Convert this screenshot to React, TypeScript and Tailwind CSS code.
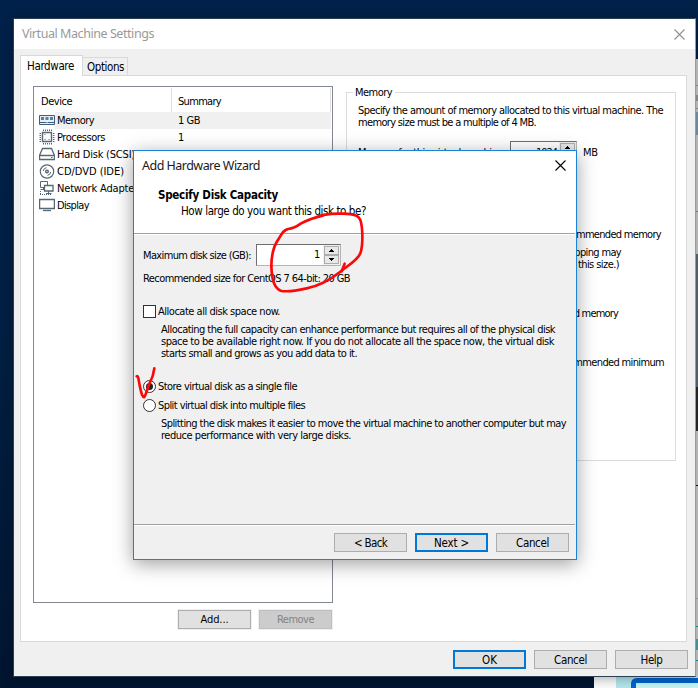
import { useLayoutEffect, useRef, useState } from "react";
import type { ReactNode } from "react";

// Spreads the letters of a label so that it takes exactly `w` pixels
function Text({ w, children, className = "" }: { w: number; children: string; className?: string }) {
  const ref = useRef<HTMLSpanElement>(null);
  const [spacing, setSpacing] = useState(0);

  useLayoutEffect(() => {
    const el = ref.current;
    if (!el) return;
    el.style.letterSpacing = "0px";
    const natural = el.getBoundingClientRect().width;
    setSpacing((w - natural) / children.length);
    el.style.letterSpacing = `${(w - natural) / children.length}px`;
  }, [w, children]);

  return (
    <span ref={ref} className={`inline-block w-max whitespace-nowrap ${className}`} style={{ letterSpacing: `${spacing}px` }}>
      {children}
    </span>
  );
}

function Button({
  label,
  w,
  variant = "normal",
}: {
  label: string;
  w: number;
  variant?: "normal" | "primary" | "disabled";
}) {
  const look = {
    normal: "border border-[#adadad] bg-[#e1e1e1] text-black",
    primary: "border-2 border-[#0078d7] bg-[#e1e1e1] text-black",
    disabled: "border border-[#bfbfbf] bg-[#cccccc] text-[#838383]",
  }[variant];
  return (
    <button className={`flex h-[19px] w-[73px] items-center justify-center leading-3 ${look}`}>
      <Text w={w}>{label}</Text>
    </button>
  );
}

function CloseIcon({ color }: { color: string }) {
  return (
    <svg width="11" height="11" viewBox="0 0 11 11" fill="none" stroke={color} strokeWidth="1.1">
      <path d="M0.5 0.5 L10.5 10.5 M10.5 0.5 L0.5 10.5" />
    </svg>
  );
}

function Spinner({ value, w, className }: { value: string; w: number; className: string }) {
  return (
    <div className={`flex border border-[#b4b4b4] border-l-[#6e6e6e] border-t-[#6e6e6e] bg-white ${className}`}>
      <div className="flex flex-1 items-center justify-end pr-0.5">
        <Text w={w}>{value}</Text>
      </div>
      <div className="flex w-[17px] flex-col bg-[#f0f0f0] p-px">
        <div className="flex flex-1 items-center justify-center border border-[#adadad] bg-[#e8e8e8]">
          <svg width="5" height="3" viewBox="0 0 5 3" shapeRendering="crispEdges"><path d="M2 0 H3 V1 H4 V2 H5 V3 H0 V2 H1 V1 H2 Z" /></svg>
        </div>
        <div className="flex flex-1 items-center justify-center border border-[#adadad] bg-[#e8e8e8]">
          <svg width="5" height="3" viewBox="0 0 5 3" shapeRendering="crispEdges"><path d="M0 0 H5 V1 H4 V2 H3 V3 H2 V2 H1 V1 H0 Z" /></svg>
        </div>
      </div>
    </div>
  );
}

const ICONS: Record<string, ReactNode> = {
  memory: (
    <>
      <path d="M0.5 3.5 H15.5 V12.5 H0.5 Z" fill="#e6eef4" stroke="#3d5f7e" />
      <path d="M2 5 H5 V8 H2 Z M6.5 5 H9.5 V8 H6.5 Z M11 5 H14 V8 H11 Z" fill="#5880a3" stroke="none" />
      <path d="M1 10.5 H7.5 M8.5 10.5 H15" stroke="#3d5f7e" />
    </>
  ),
  cpu: (
    <>
      <path d="M3.5 3.5 H12.5 V12.5 H3.5 Z" strokeWidth="1.4" />
      <path d="M4.5 0.5 V2 M6.5 0.5 V2 M8.5 0.5 V2 M10.5 0.5 V2 M12.5 0.5 V2 M4.5 14 V15.5 M6.5 14 V15.5 M8.5 14 V15.5 M10.5 14 V15.5 M12.5 14 V15.5" />
      <path d="M0.5 4.5 H2 M0.5 6.5 H2 M0.5 8.5 H2 M0.5 10.5 H2 M0.5 12.5 H2 M14 4.5 H15.5 M14 6.5 H15.5 M14 8.5 H15.5 M14 10.5 H15.5 M14 12.5 H15.5" />
      <path d="M5.5 5.5 H6.5 M9.5 10.5 H10.5 M5.5 10.5 H6.5" />
    </>
  ),
  disk: (
    <>
      <path d="M3.5 2.5 H12.5 L15.5 9.5 V13.5 H0.5 V9.5 Z M0.5 9.5 H15.5" strokeWidth="1.3" />
      <path d="M12 11.5 H13.5" />
    </>
  ),
  cd: (
    <>
      <circle cx="8" cy="8.5" r="6.7" strokeWidth="1.2" />
      <circle cx="8" cy="8.5" r="1.3" strokeWidth="1.4" />
      <path d="M4.2 8 A4 4 0 0 1 7.5 4.7 M11.8 9 A4 4 0 0 1 8.5 12.3" />
    </>
  ),
  network: (
    <>
      <path d="M1.5 1.5 H8.5 V7.5 H1.5 Z M4.5 7.5 V9.5 M1.5 9.5 H5" />
      <path d="M5.5 5.5 H14 V11 H5.5 Z" fill="#fff" strokeWidth="1.3" />
      <path d="M9.5 11 V13 M7 13.5 H12.5" />
      <path d="M1.5 11 V14.5 M1 14.5 H12" strokeDasharray="1 1" />
    </>
  ),
  display: (
    <>
      <path d="M0.6 2.5 H15.4 V11.5 H0.6 Z" strokeWidth="1.3" />
      <path d="M4 13.5 H12" strokeWidth="1.3" />
    </>
  ),
};

const DEVICES = [
  { icon: "memory", name: "Memory", w: 37, summary: "1 GB", sw: 22 },
  { icon: "cpu", name: "Processors", w: 48, summary: "1", sw: 6 },
  { icon: "disk", name: "Hard Disk (SCSI)", w: 78, summary: "", sw: 0 },
  { icon: "cd", name: "CD/DVD (IDE)", w: 67, summary: "", sw: 0 },
  { icon: "network", name: "Network Adapter", w: 81, summary: "", sw: 0 },
  { icon: "display", name: "Display", w: 32, summary: "", sw: 0 },
];

function DeviceList() {
  return (
    <div className="h-[517px] w-[300px] border border-[#828790] bg-white">
      <div className="flex h-[25px] pr-px pt-px">
        <div className="flex w-[138px] items-center border-r border-[#e0e0e0] pl-[7px] pt-1">
          <Text w={31}>Device</Text>
        </div>
        <div className="flex flex-1 items-center border-r border-[#e0e0e0] pl-1.5 pt-1">
          <Text w={43}>Summary</Text>
        </div>
      </div>
      {DEVICES.map(({ icon, name, w, summary, sw }) => (
        <div key={icon} className="flex h-[17px] pl-[5px] pr-px">
          <svg width="16" height="17" viewBox="0 0 16 17" fill="none" stroke="#566775">
            {ICONS[icon]}
          </svg>
          <div className={`flex flex-1 items-center pt-px ${icon === "memory" ? "bg-[#f0f0f0]" : ""}`}>
            <div className="w-[123px] pl-0.5">
              <Text w={w}>{name}</Text>
            </div>
            {summary && <Text w={sw}>{summary}</Text>}
          </div>
        </div>
      ))}
    </div>
  );
}

function MemoryGroup() {
  return (
    <fieldset className="relative h-[369px] w-[330px] border border-[#dcdcdc] pl-[11px]">
      <div className="-ml-[5px] -mt-1.5 h-3 w-[42px] bg-white pl-0.5">
        <Text w={37}>Memory</Text>
      </div>
      <div className="mt-1.5 flex flex-col">
        <Text w={305}>Specify the amount of memory allocated to this virtual machine. The</Text>
        <Text w={178}>memory size must be a multiple of 4 MB.</Text>
      </div>
      <div className="mt-3 flex h-[23px] items-center">
        <div className="w-[152px]">
          <Text w={148}>Memory for this virtual machine:</Text>
        </div>
        <Spinner value="1024" w={21} className="h-[23px] w-[67px]" />
        <div className="pl-1.5">
          <Text w={15}>MB</Text>
        </div>
      </div>
      <div className="ml-[153px] mt-[65px] flex flex-col">
        <Text w={150}>Maximum recommended memory</Text>
        <Text w={106} className="ml-1 mt-1.5">(Memory swapping may</Text>
        <Text w={104} className="ml-1">occur beyond this size.)</Text>
        <Text w={104} className="ml-[3px] mt-[37px]">Recommended memory</Text>
        <Text w={153} className="mt-[37px]">Guest OS recommended minimum</Text>
      </div>
    </fieldset>
  );
}

function SettingsWindow() {
  return (
    <div className="absolute left-[13px] top-[18px] flex h-[659px] w-[683px] flex-col border border-[#2d4053] border-r-[#9a9a9a] bg-[#f0f0f0] shadow-[0_2px_10px_rgba(0,0,0,0.3)]">
      <div className="flex h-[30px] shrink-0 items-center justify-between bg-white pl-2 pr-[10px]">
        <Text w={132} className="font-['Noto_Sans'] text-[12.5px] leading-4 text-[#999]">Virtual Machine Settings</Text>
        <CloseIcon color="#8f8f8f" />
      </div>

      <div className="mt-1.5 flex h-[20px] items-end pl-1.5">
        <div className="relative z-10 -mb-px flex h-[21px] w-[63px] items-center border border-b-0 border-[#d9d9d9] bg-white pl-1.5">
          <Text w={47} className="text-[11.5px]">Hardware</Text>
        </div>
        <div className="-ml-px flex h-[18px] w-[46px] items-center border border-b-0 border-[#d9d9d9] pl-1">
          <Text w={37} className="pt-px text-[11.5px]">Options</Text>
        </div>
      </div>

      <div className="ml-1.5 flex h-[567px] w-[667px] gap-[13px] border border-[#d9d9d9] bg-white pl-3 pt-2.5">
        <div className="flex flex-col">
          <DeviceList />
          <div className="mt-1.5 flex justify-end gap-1.5">
            <div className="border border-[#f0f0f0]"><Button label="Add..." w={28} /></div>
            <div className="border border-[#f0f0f0]"><Button label="Remove" w={37} variant="disabled" /></div>
          </div>
        </div>
        <div className="pt-1.5">
          <MemoryGroup />
        </div>
      </div>

      <div className="mt-2 flex justify-end gap-2 pr-[7px] text-[11.5px]">
        <Button label="OK" w={15} variant="primary" />
        <Button label="Cancel" w={33} />
        <Button label="Help" w={22} />
      </div>
    </div>
  );
}

function Radio({ checked = false }: { checked?: boolean }) {
  return (
    <span className="flex size-[13px] shrink-0 items-center justify-center rounded-full border border-[#333] bg-white">
      {checked && <span className="size-[7px] rounded-full bg-[#222]" />}
    </span>
  );
}

function WizardDialog() {
  return (
    <div className="absolute left-[133px] top-[150px] flex h-[410px] w-[444px] flex-col border border-[#1883d7] bg-[#f0f0f0] shadow-[0_4px_18px_rgba(0,0,0,0.38)]">
      <div className="h-[82px] bg-white">
        <div className="flex h-[29px] items-center justify-between pl-2 pr-[10px]">
          <Text w={118} className="font-['Noto_Sans'] text-[12.5px] leading-4 text-[#1a1a1a]">Add Hardware Wizard</Text>
          <CloseIcon color="#000" />
        </div>
        <div className="flex flex-col pl-6 pt-[7px]">
          <Text w={120} className="text-[11.5px] font-bold leading-4">Specify Disk Capacity</Text>
          <Text w={185} className="ml-[23px] text-[11.5px] leading-4">How large do you want this disk to be?</Text>
        </div>
      </div>
      <div className="mr-px h-0.5 border-t border-[#a0a0a0] bg-white" />

      <div className="flex h-[289px] flex-col pl-[9px] pt-[9px]">
        <div className="flex items-center">
          <div className="w-[113px] pt-0.5">
            <Text w={108}>Maximum disk size (GB):</Text>
          </div>
          <Spinner value="1" w={7} className="h-[22px] w-[85px]" />
        </div>
        <Text w={207} className="mt-[7px]">Recommended size for CentOS 7 64-bit: 20 GB</Text>

        <div className="mt-5 flex items-center gap-0.5">
          <span className="size-[13px] border border-[#333] bg-white" />
          <Text w={122}>Allocate all disk space now.</Text>
        </div>
        <div className="ml-[18px] mt-1.5 flex flex-col">
          <Text w={394}>Allocating the full capacity can enhance performance but requires all of the physical disk</Text>
          <Text w={393}>space to be available right now. If you do not allocate all the space now, the virtual disk</Text>
          <Text w={196}>starts small and grows as you add data to it.</Text>
        </div>

        <div className="mt-5 flex items-center gap-0.5">
          <Radio checked />
          <Text w={139}>Store virtual disk as a single file</Text>
        </div>
        <div className="mt-1.5 flex items-center gap-0.5">
          <Radio />
          <Text w={147}>Split virtual disk into multiple files</Text>
        </div>
        <div className="ml-[18px] mt-1.5 flex flex-col">
          <Text w={405}>Splitting the disk makes it easier to move the virtual machine to another computer but may</Text>
          <Text w={190}>reduce performance with very large disks.</Text>
        </div>
      </div>

      <div className="mr-px h-0.5 shrink-0 border-t border-[#a0a0a0] bg-white" />
      <div className="flex justify-end gap-2 pr-[7px] pt-[7px] text-[11.5px]">
        <Button label="< Back" w={33} />
        <Button label="Next >" w={35} variant="primary" />
        <Button label="Cancel" w={33} />
      </div>
    </div>
  );
}

// Parts of other windows that show at the right and bottom edges
function Backdrop() {
  return (
    <svg className="absolute inset-0" width="698" height="688" shapeRendering="crispEdges">
      <rect x="695" y="59" width="3" height="618" fill="#cfcfcf" />
      <rect x="695" y="85" width="3" height="1" fill="#999" />
      <rect x="696" y="95" width="2" height="6" fill="#999" />
      <rect x="695" y="108" width="3" height="1" fill="#999" />
      <rect x="695" y="112" width="3" height="23" fill="#7f9db5" />
      <rect x="695" y="211" width="3" height="1" fill="#8c8c8c" />
      <rect x="695" y="254" width="3" height="133" fill="#5f6e78" />
      <rect x="695" y="387" width="3" height="44" fill="#2a2a2a" />
      <rect x="695" y="485" width="3" height="1" fill="#111" />
      <rect x="695" y="598" width="3" height="1" fill="#aaa" />
      <rect x="695" y="626" width="3" height="1" fill="#189a9a" />
      <rect x="695" y="639" width="3" height="11" fill="#4fa9a9" />
      <rect x="695" y="660" width="3" height="1" fill="#189a9a" />
      <rect x="594" y="676" width="22" height="12" fill="#fafafa" />
      <rect x="616" y="676" width="82" height="12" fill="#b2e6ec" />
      <rect x="633.5" y="680.5" width="80" height="20" rx="3" fill="#c5f3f1" stroke="#0063cf" strokeWidth="5" shapeRendering="auto" />
    </svg>
  );
}

function Annotations() {
  return (
    <>
      <svg className="absolute left-[130px] top-[145px]" width="240" height="160" viewBox="0 0 720 480" fill="none" stroke="#fb0808" strokeWidth="8" strokeLinecap="round" strokeLinejoin="round">
        <path d="M557 217 C580 206 610 205 640 206 C670 207 687 210 692 228 C698 250 700 300 691 325 C682 347 655 360 630 381 C600 405 570 422 530 430 C495 438 470 442 452 437 C432 428 426 405 424 365 C424 325 432 300 447 280 C455 266 460 256 474 252 C490 250 500 245 512 236 C530 226 550 218 580 211" />
        <path d="M644 356 L635 379" />
      </svg>
      <svg className="absolute left-[130px] top-[360px]" width="30" height="40" viewBox="0 195 90 120" fill="none" stroke="#fb0808" strokeWidth="8" strokeLinecap="round" strokeLinejoin="round">
        <path d="M20 244 C26 240 26 262 31 280 C34 296 38 308 43 306 C50 296 52 278 60 262 C69 246 71 235 73 220" />
      </svg>
    </>
  );
}

export default function App() {
  return (
    <div className="relative h-[688px] w-[698px] overflow-hidden bg-linear-to-b from-[#00214a] via-[#001f42] to-[#001530] font-['DejaVu_Sans_Condensed','DejaVu_Sans',sans-serif] text-[11px] leading-3 text-black">
      <Backdrop />
      <SettingsWindow />
      <WizardDialog />
      <Annotations />
    </div>
  );
}
